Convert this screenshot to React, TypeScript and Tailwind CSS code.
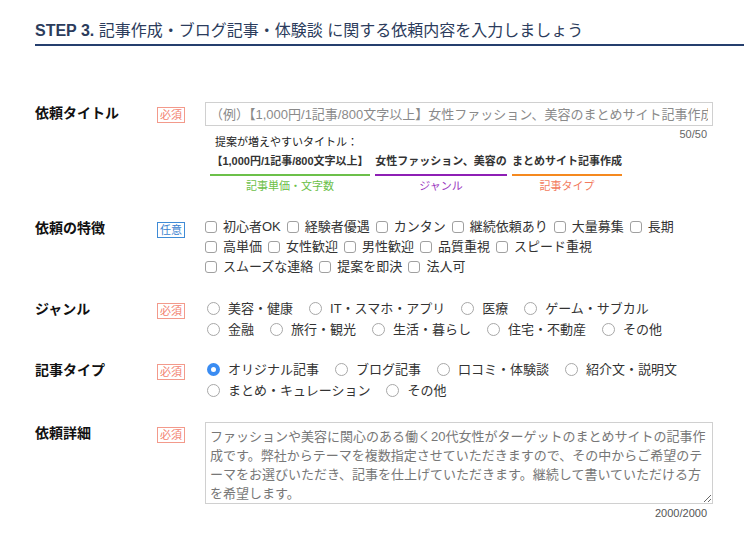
import React from 'react';

const FEATURES = [
  ['初心者OK', '経験者優遇', 'カンタン', '継続依頼あり', '大量募集', '長期'],
  ['高単価', '女性歓迎', '男性歓迎', '品質重視', 'スピード重視'],
  ['スムーズな連絡', '提案を即決', '法人可'],
];

const GENRES = [
  ['美容・健康', 'IT・スマホ・アプリ', '医療', 'ゲーム・サブカル'],
  ['金融', '旅行・観光', '生活・暮らし', '住宅・不動産', 'その他'],
];

const TYPES = [
  ['オリジナル記事', 'ブログ記事', '口コミ・体験談', '紹介文・説明文'],
  ['まとめ・キュレーション', 'その他'],
];

const DETAIL =
  'ファッションや美容に関心のある働く20代女性がターゲットのまとめサイトの記事作\n' +
  '成です。弊社からテーマを複数指定させていただきますので、その中からご希望のテ\n' +
  'ーマをお選びいただき、記事を仕上げていただきます。継続して書いていただける方\n' +
  'を希望します。';

const Badge: React.FC<{ optional?: boolean }> = ({ optional }) =>
  optional ? (
    <span className="mt-[3px] inline-block border border-[#3f8bd6] px-[2px] text-[11px] leading-[14px] text-[#3a82cf]">任意</span>
  ) : (
    <span className="mt-[3px] inline-block border border-[#f39a8b] px-[2px] text-[11px] leading-[14px] text-[#f2826f]">必須</span>
  );

const Row: React.FC<{ label: string; optional?: boolean; className?: string; children: React.ReactNode }> = ({ label, optional, className, children }) => (
  <div className={`flex ${className || ''}`}>
    <div className="w-[122px] shrink-0 text-[14px] font-bold leading-[22px] text-[#111]">{label}</div>
    <div className="w-[48px] shrink-0"><Badge optional={optional} /></div>
    <div className="w-[508px] shrink-0">{children}</div>
  </div>
);

const Checkbox: React.FC<{ text: string }> = ({ text }) => (
  <span className="mr-[6px] flex items-center">
    <span className="mr-[6px] h-[12px] w-[12px] rounded-[3px] border border-[#a0a0a0] bg-white" />
    <span>{text}</span>
  </span>
);

const Radio: React.FC<{ text: string; checked?: boolean }> = ({ text, checked }) => (
  <span className="mr-[14px] flex items-center">
    {checked ? (
      <span className="ml-[2px] mr-[8px] flex h-[13px] w-[13px] items-center justify-center rounded-full bg-[#3a8cf2]">
        <span className="h-[5px] w-[5px] rounded-full bg-white" />
      </span>
    ) : (
      <span className="ml-[2px] mr-[8px] h-[13px] w-[13px] rounded-full border border-[#a8a8a8] bg-white" />
    )}
    <span>{text}</span>
  </span>
);

export default function App() {
  return (
    <div className="min-h-screen overflow-hidden bg-white font-['Liberation_Sans','Noto_Sans_CJK_JP',sans-serif] text-[#333]">
      <div className="pl-[35px] pt-[20px]">
        <h2 className="w-[800px] border-b-2 border-[#253f6e] pb-[2px] text-[16px] leading-[22px] text-[#2c3c5c]">
          <span className="font-bold">STEP 3.</span> 記事作成・ブログ記事・体験談 に関する依頼内容を入力しましょう
        </h2>

        <Row label="依頼タイトル" className="mt-[56px]">
          <input
            readOnly
            className="block h-[24px] w-full border border-[#d0d0d0] px-[4px] text-[13px] text-[#333] outline-none placeholder:text-[#8a8a8a]"
            placeholder="（例）【1,000円/1記事/800文字以上】女性ファッション、美容のまとめサイト記事作成"
          />
          <div className="mt-[1px] pr-[6px] text-right text-[11px] leading-[14px] text-[#666]">50/50</div>
          <div className="-mt-[6px] pl-[10px] text-[11px] leading-[14px] text-[#222]">提案が増えやすいタイトル：</div>
          <div className="ml-[5px] mt-[5px] flex gap-[5px] text-[11px] leading-[14px]">
            <div className="w-[160px] text-center">
              <div className="border-b-2 border-[#6cc04a] pb-[6px] font-bold text-[#333]">【1,000円/1記事/800文字以上】</div>
              <div className="mt-[3px] text-[#6cc04a]">記事単価・文字数</div>
            </div>
            <div className="w-[132px] text-center">
              <div className="border-b-2 border-[#8e1fb5] pb-[6px] font-bold text-[#333]">女性ファッション、美容の</div>
              <div className="mt-[3px] text-[#9a35c0]">ジャンル</div>
            </div>
            <div className="w-[110px] text-center">
              <div className="border-b-2 border-[#f5891f] pb-[6px] font-bold text-[#333]">まとめサイト記事作成</div>
              <div className="mt-[3px] text-[#f27b5e]">記事タイプ</div>
            </div>
          </div>
        </Row>

        <Row label="依頼の特徴" optional className="mt-[24px]">
          <div className="text-[13px] leading-[20px]">
            {FEATURES.map((line, i) => (
              <div key={i} className="flex">
                {line.map((f) => <Checkbox key={f} text={f} />)}
              </div>
            ))}
          </div>
        </Row>

        <Row label="ジャンル" className="mt-[21px]">
          <div className="text-[13px] leading-[21px]">
            {GENRES.map((line, i) => (
              <div key={i} className="flex">
                {line.map((g) => <Radio key={g} text={g} />)}
              </div>
            ))}
          </div>
        </Row>

        <Row label="記事タイプ" className="mt-[19px]">
          <div className="text-[13px] leading-[21px]">
            {TYPES.map((line, i) => (
              <div key={i} className="flex">
                {line.map((t) => <Radio key={t} text={t} checked={t === 'オリジナル記事'} />)}
              </div>
            ))}
          </div>
        </Row>

        <Row label="依頼詳細" className="mt-[21px]">
          <textarea
            readOnly
            value={DETAIL}
            wrap="off"
            className="block h-[82px] w-full overflow-hidden whitespace-pre border border-[#d0d0d0] px-[4px] pt-[4px] text-[13px] leading-[19px] text-[#777] outline-none"
          />
          <div className="mt-[2px] pr-[6px] text-right text-[11px] leading-[14px] text-[#555]">2000/2000</div>
        </Row>
      </div>
    </div>
  );
}
